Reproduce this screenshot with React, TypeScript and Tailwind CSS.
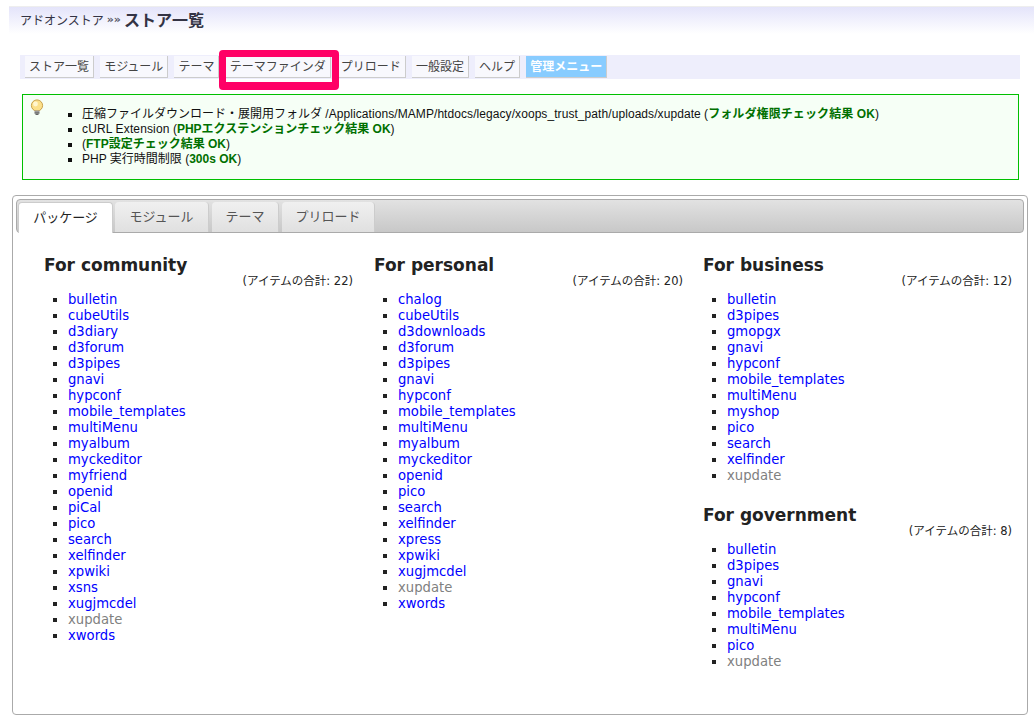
import React from 'react';

const navItems = ['ストア一覧', 'モジュール', 'テーマ', 'テーマファインダ', 'プリロード', '一般設定', 'ヘルプ'];

const tabItems = ['モジュール', 'テーマ', 'プリロード'];

const community = ['bulletin', 'cubeUtils', 'd3diary', 'd3forum', 'd3pipes', 'gnavi', 'hypconf', 'mobile_templates', 'multiMenu', 'myalbum', 'myckeditor', 'myfriend', 'openid', 'piCal', 'pico', 'search', 'xelfinder', 'xpwiki', 'xsns', 'xugjmcdel', 'xupdate', 'xwords'];
const personal = ['chalog', 'cubeUtils', 'd3downloads', 'd3forum', 'd3pipes', 'gnavi', 'hypconf', 'mobile_templates', 'multiMenu', 'myalbum', 'myckeditor', 'openid', 'pico', 'search', 'xelfinder', 'xpress', 'xpwiki', 'xugjmcdel', 'xupdate', 'xwords'];
const business = ['bulletin', 'd3pipes', 'gmopgx', 'gnavi', 'hypconf', 'mobile_templates', 'multiMenu', 'myshop', 'pico', 'search', 'xelfinder', 'xupdate'];
const government = ['bulletin', 'd3pipes', 'gnavi', 'hypconf', 'mobile_templates', 'multiMenu', 'pico', 'xupdate'];

const BulbIcon = () => (
  <svg width="16" height="17" viewBox="0 0 16 17" className="shrink-0">
    <circle cx="8" cy="6.5" r="5.6" fill="#fbe08a" stroke="#c9a04a" strokeWidth="1" />
    <circle cx="6.5" cy="5" r="2.4" fill="#fff6d0" />
    <rect x="5.5" y="11.5" width="5" height="1.6" fill="#9a9a9a" />
    <rect x="5.5" y="13.1" width="5" height="1.6" fill="#6e6e6e" />
    <rect x="6.5" y="14.7" width="3" height="1.2" fill="#555555" />
  </svg>
);

const StoreGroup: React.FC<{ title: string; total: number; items: string[]; className?: string }> = ({ title, total, items, className }) => (
  <div className={className}>
    <h3 className="pt-[1px] text-[17px] leading-[20px] font-bold text-[#222222]">{title}</h3>
    <div className="-mt-[1px] text-right text-[11.5px] leading-[14px] text-[#222222]">(アイテムの合計: {total})</div>
    <ul className="mt-[4px] pl-[24px] list-[square] text-[13.2px] leading-[16px] text-[#222222]">
      {items.map((item, i) => (
        <li key={i}>
          <a href="#" className={item === 'xupdate' ? 'text-[#808080]' : 'text-[#0000ff]'}>{item}</a>
        </li>
      ))}
    </ul>
  </div>
);

export default function App() {
  return (
    <div className="relative w-[1036px] h-[722px] overflow-hidden bg-white pt-[6px] font-['DejaVu_Sans','Noto_Sans_CJK_JP',sans-serif]">
      {/* page title */}
      <div className="ml-[9px] mr-[2px] h-[28px] flex items-center pl-[11px] gap-[3px] border-t border-[#eeeeee] bg-gradient-to-b from-[#e4e4fa] to-[#ffffff] text-[#333344]">
        <span className="text-[12px] font-['Liberation_Sans','Noto_Sans_CJK_JP',sans-serif]">アドオンストア</span>
        <span className="text-[11px] font-bold text-[#555566]">»»</span>
        <span className="text-[16px] font-bold font-['Liberation_Sans','Noto_Sans_CJK_JP',sans-serif]">ストア一覧</span>
      </div>

      {/* admin nav */}
      <div className="mt-[21px] ml-[20px] mr-[16px] h-[24px] flex items-start gap-[6.15px] pl-[5px] pt-[1px] bg-[#eeeefc] font-['Liberation_Sans','Noto_Sans_CJK_JP',sans-serif]">
        {navItems.map((item) => (
          <a key={item} href="#" className="h-[22px] px-[4px] flex items-center bg-[#f8f8fd] border-r border-b border-[#cccccc] text-[12px] text-[#444444] whitespace-nowrap">{item}</a>
        ))}
        <a href="#" className="h-[22px] px-[4px] flex items-center bg-[#88ccff] border-r border-b border-[#cccccc] text-[12px] font-bold text-white whitespace-nowrap">管理メニュー</a>
      </div>

      {/* highlight drawn over the screenshot */}
      <div className="absolute left-[219px] top-[50px] w-[120px] h-[40px] rounded-[4px] border-[7px] border-b-[8px] border-[#ff0066]" />

      {/* notice */}
      <div className="mt-[15px] ml-[22px] mr-[17px] h-[86px] flex items-start pl-[6px] pt-[4px] border border-[#00c000] bg-[#f6fff6] font-['Liberation_Sans','Noto_Sans_CJK_JP',sans-serif] text-[12px] leading-[15px] text-[#111111]">
        <BulbIcon />
        <ul className="ml-[37px] mt-[8px] list-[square]">
          <li>圧縮ファイルダウンロード・展開用フォルダ <span className="tracking-[0.07px]">/Applications/MAMP/htdocs/legacy/xoops_trust_path/uploads/xupdate</span> (<b className="text-[#007000] tracking-[0.1px]">フォルダ権限チェック結果 OK</b>)</li>
          <li><span className="tracking-[0.14px]">cURL Extension</span> (<b className="text-[#007000]">PHPエクステンションチェック結果 OK</b>)</li>
          <li>(<b className="text-[#007000]">FTP設定チェック結果 OK</b>)</li>
          <li>PHP 実行時間制限 (<b className="text-[#007000]">300s OK</b>)</li>
        </ul>
      </div>

      {/* store panel */}
      <div className="mt-[15px] ml-[12px] mr-[8px] h-[520px] p-[3px] border border-[#aaaaaa] rounded-[4px]">
        <div className="h-[34px] flex items-end gap-[2px] pl-[1px] border border-[#aaaaaa] rounded-[4px] bg-gradient-to-b from-[#e2e2e2] to-[#c8c8c8] text-[13px]">
          <a href="#" className="relative -mb-px w-[95px] h-[31px] flex items-center justify-center bg-white border border-b-0 border-[#cccccc] rounded-t-[4px] text-[#222222]">パッケージ</a>
          {tabItems.map((tab, i) => (
            <a key={tab} href="#" className={`${i === 0 ? 'w-[94px]' : i === 1 ? 'w-[67px] ml-[1px]' : 'w-[93px] ml-[1px]'} h-[30px] flex items-center justify-center bg-gradient-to-b from-[#f0f0f0] to-[#e0e0e0] border-r border-[#cccccc] rounded-t-[4px] text-[#555555]`}>{tab}</a>
          ))}
        </div>

        <div className="grid grid-cols-[330px_329px_1fr] pt-[21px] pl-[28px] pr-[12px]">
          <StoreGroup title="For community" total={22} items={community} className="pr-[21px]" />
          <StoreGroup title="For personal" total={20} items={personal} className="pr-[20px]" />
          <div>
            <StoreGroup title="For business" total={12} items={business} />
            <StoreGroup title="For government" total={8} items={government} className="mt-[20px]" />
          </div>
        </div>
      </div>
    </div>
  );
}
